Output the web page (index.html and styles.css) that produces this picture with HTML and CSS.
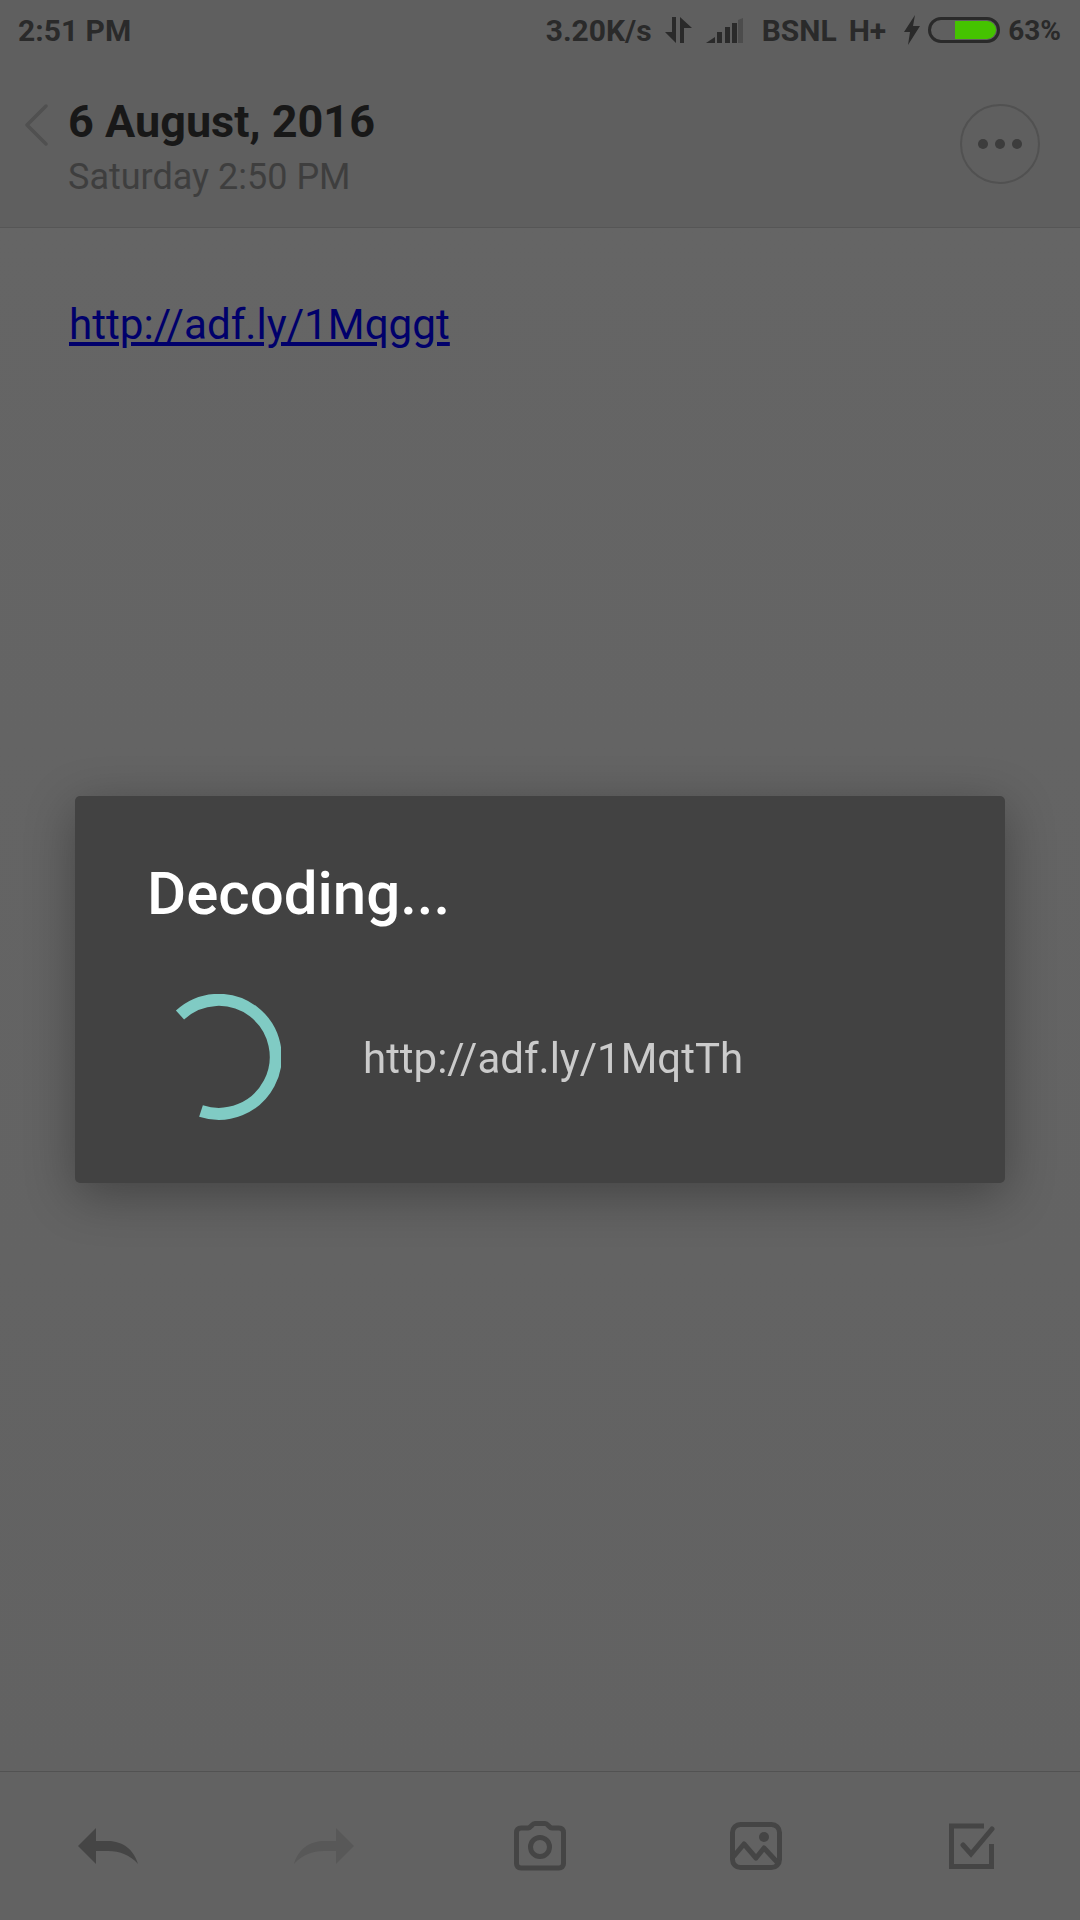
FILE: index.html
```html
<!DOCTYPE html>
<html>
<head>
<meta charset="utf-8" />
<title>Note</title>
<link rel="stylesheet" href="styles.css">
</head>
<body>
<div class="page">
	<div class="top">
		<div class="status">
			<span class="time">2:51 PM</span>
			<div class="status-right">
				<span class="speed">3.20K/s</span>
				<svg class="ic-arrows" width="27" height="26" viewBox="0 0 27 26"><path d="M7 0h4v26L0 15h7zM15 0l12 11h-8v15h-4z" fill="#2a2a2a"/></svg>
				<svg class="ic-signal" width="37" height="25" viewBox="0 0 37 25">
					<path d="M0 25 9 19v6z" fill="#2a2a2a"/>
					<rect x="11" y="14" width="5" height="11" fill="#2a2a2a"/>
					<rect x="19" y="9" width="5" height="16" fill="#2a2a2a"/>
					<rect x="26" y="5" width="5" height="20" fill="#2a2a2a"/>
					<path d="M32 2l5-2v25h-5z" fill="#4c4c4c"/>
				</svg>
				<span class="carrier">BSNL</span>
				<span class="net">H+</span>
				<svg class="ic-bolt" width="16" height="30" viewBox="0 0 16 30"><path d="M11 0 0 17h6L4 30 16 11H9z" fill="#2a2a2a"/></svg>
				<div class="battery"><div class="battery-fill"></div></div>
				<span class="pct">63%</span>
			</div>
		</div>
		<div class="head">
			<svg class="ic-back" width="24" height="42" viewBox="0 0 24 42"><path d="M22 2 3 21l19 19" fill="none" stroke="#505050" stroke-width="3.4" stroke-linecap="round" stroke-linejoin="round"/></svg>
			<div class="head-text">
				<div class="title">6 August, 2016</div>
				<div class="sub">Saturday 2:50 PM</div>
			</div>
			<div class="more"><i></i><i></i><i></i></div>
		</div>
	</div>

	<div class="content">
		<a class="link" href="#">http://adf.ly/1Mqggt</a>
	</div>

	<div class="bottom">
		<svg width="60" height="36" viewBox="0 0 60 36"><path d="M0 18 18 0v13h12c15 0 26 9 30 23-8-9-18-13-30-13H18v13z" fill="#454545"/></svg>
		<svg width="60" height="36" viewBox="0 0 60 36"><path d="M60 18 42 0v13H30C15 13 4 22 0 36c8-9 18-13 30-13h12v13z" fill="#585858"/></svg>
		<svg width="52" height="50" viewBox="0 0 52 50" fill="none" stroke="#454545" stroke-width="5">
			<path d="M7 7h7c3 0 4-4.500 7-4.500h10c3 0 4 4.500 7 4.500h7c3 0 4.500 2 4.500 4.500v31c0 3-2 4.500-4.500 4.500H7c-3 0-4.500-2-4.500-4.500v-31C2.500 9 4 7 7 7z" stroke-linejoin="round"/>
			<circle cx="26" cy="26" r="9.500"/>
		</svg>
		<svg width="52" height="48" viewBox="0 0 52 48" fill="none" stroke="#454545" stroke-width="5" stroke-linejoin="round" stroke-linecap="round">
			<rect x="2.500" y="2.500" width="47" height="43" rx="8"/>
			<path d="M4 34 14 22l12 14 8-10 13 14"/>
			<circle cx="34" cy="15" r="5" fill="#454545" stroke="none"/>
		</svg>
		<svg width="46" height="46" viewBox="0 0 46 46" fill="none" stroke="#454545" stroke-width="5" stroke-linecap="round">
			<path d="M35 3H2.500v40.500h40V21" stroke-linecap="butt"/>
			<path d="M14 22l8 9L43 6"/>
		</svg>
	</div>
</div>

<div class="dialog">
	<div class="dialog-title">Decoding...</div>
	<div class="dialog-row">
		<svg class="spinner" width="126" height="126" viewBox="0 0 126 126"><path d="M25 21A57 57 0 1 1 46 117" fill="none" stroke="#80cbc4" stroke-width="12"/></svg>
		<span class="dialog-url">http://adf.ly/1MqtTh</span>
	</div>
</div>
</body>
</html>
```

FILE: styles.css
```css
html, body {
	margin: 0;
	padding: 0;
}
body {
	width: 1080px;
	height: 1920px;
	overflow: hidden;
	background-color: #646464;
	font-family: Roboto, "Liberation Sans", sans-serif;
}
.page {
	display: flex;
	flex-direction: column;
	height: 1920px;
}

/* top part */
.top {
	height: 227px;
	background: #5f5f5f;
	border-bottom: 1px solid #565656;
}
.status {
	display: flex;
	justify-content: space-between;
	align-items: center;
	height: 60px;
	padding: 0 19px 0 18px;
	color: #2a2a2a;
	font-size: 30px;
	font-weight: 700;
}
.status-right {
	display: flex;
	align-items: center;
}
.ic-arrows { margin-left: 13px; }
.ic-signal { margin-left: 14px; }
.carrier { margin-left: 19px; }
.net { margin-left: 12px; }
.ic-bolt { margin-left: 18px; }
.battery {
	box-sizing: border-box;
	display: flex;
	justify-content: flex-end;
	width: 72px;
	height: 26px;
	margin-left: 8px;
	padding: 1px;
	border: 3px solid #2a2a2a;
	border-radius: 13px;
}
.battery-fill {
	width: 41px;
	height: 100%;
	background: #45c300;
	border-radius: 0 9px 9px 0;
}
.pct {
	margin-left: 8px;
	font-size: 28px;
}

.head {
	display: flex;
	align-items: flex-start;
	padding: 0 40px 0 24px;
}
.ic-back {
	margin-top: 44px;
}
.head-text {
	flex: 1;
	margin-left: 20px;
}
.title {
	margin-top: 33px;
	font-size: 45px;
	line-height: 58px;
	font-weight: 700;
	color: #181818;
}
.sub {
	margin-top: 1px;
	font-size: 36px;
	line-height: 50px;
	color: #3e3e3e;
}
.more {
	box-sizing: border-box;
	display: flex;
	justify-content: center;
	align-items: center;
	gap: 7px;
	width: 80px;
	height: 80px;
	margin-top: 44px;
	border: 2px solid #515151;
	border-radius: 50%;
}
.more i {
	width: 10px;
	height: 10px;
	border-radius: 50%;
	background: #3c3c3c;
}

/* note body */
.content {
	flex: 1;
	padding: 72px 69px 0;
	background: linear-gradient(#656565, #626262);
}
.link {
	font-size: 42.2px;
	line-height: 50px;
	color: #00006b;
	text-decoration: underline;
}

.bottom {
	display: grid;
	grid-template-columns: repeat(5, 1fr);
	justify-items: center;
	align-items: center;
	height: 148px;
	background: #626262;
	border-top: 1px solid #525252;
}

/* popup */
.dialog {
	position: fixed;
	left: 75px;
	top: 796px;
	box-sizing: border-box;
	width: 930px;
	height: 387px;
	padding: 59px 72px 0;
	background: #424242;
	border-radius: 5px;
	box-shadow: 0 12px 50px rgba(0, 0, 0, 0.32);
}
.dialog-title {
	font-size: 60px;
	line-height: 78px;
	font-weight: 500;
	color: #fff;
}
.dialog-row {
	display: flex;
	align-items: center;
	margin-top: 61px;
}
.spinner {
	margin-left: 8px;
}
.dialog-url {
	margin-top: 2px;
	margin-left: 82px;
	font-size: 42px;
	color: #cbcbcb;
}
```
